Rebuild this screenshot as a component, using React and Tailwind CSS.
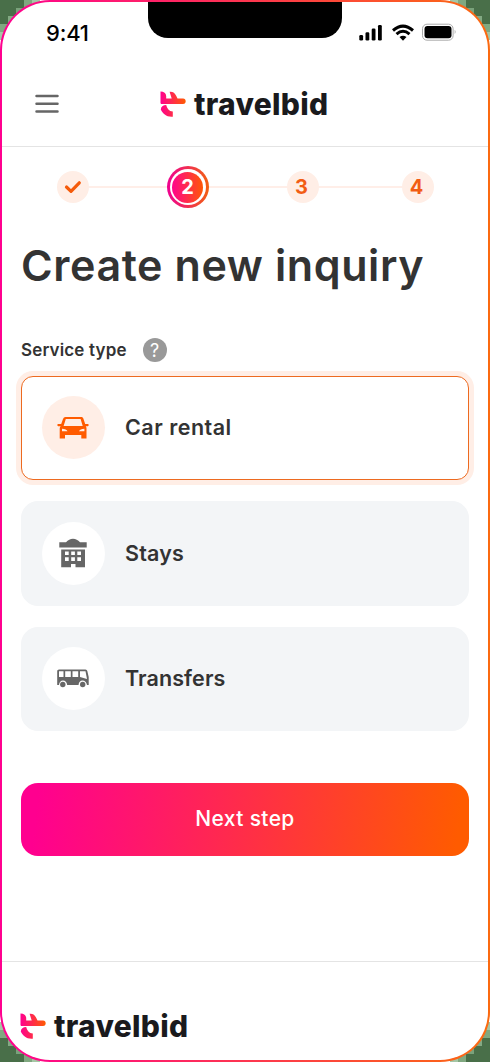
import React from "react";

const POINTS = [
  [0, 0, "#496f49"], [8, 0, "#496f49"], [16, 0, "#496f49"], [24, 0, "#80a880"], [32, 0, "#a5c6a5"],
  [0, 8, "#496f49"], [8, 8, "#496f49"], [16, 8, "#7aa27b"], [0, 16, "#496f49"], [8, 16, "#83a983"],
  [0, 24, "#80a880"], [0, 32, "#a5c6a5"],
];

function Corner({ className }) {
  return (
    <svg className={`absolute h-10 w-10 ${className}`} viewBox="0 0 40 40" shapeRendering="crispEdges">
      {POINTS.map(([x, y, fill]) => (
        <rect key={`${x}-${y}`} x={x} y={y} width="8" height="8" fill={fill} />
      ))}
    </svg>
  );
}

function Logo() {
  return (
    <div className="flex items-center">
      <svg className="h-[26px] w-[26px] shrink-0" viewBox="0 0 26 26">
        <defs>
          <linearGradient id="plane" x1="0" x2="1" y1="0" y2="0">
            <stop stopColor="#ff008f" />
            <stop offset="1" stopColor="#ff5b00" />
          </linearGradient>
        </defs>
        <path
          fill="url(#plane)"
          d="M.5 .5C4 .5 6 2 6.200 5V7.500H11.700L9.600 .8C13 .5 14.800 2 16.300 5L17.500 7.500H23C26.600 7.500 26.600 13 23 13H1L.5 12ZM.8 18.500C1 15.500 3 14 6.200 14C7.200 17.300 9 20.300 12.800 20.600V25.700C6.500 26.300 2.800 22.500 .8 18.500Z"
        />
      </svg>
      <span className="ml-[8px] text-[30px] leading-[40px] font-extrabold tracking-[0.3px] text-[#1a1a1d]">travelbid</span>
    </div>
  );
}

function StatusBar() {
  return (
    <div className="flex h-[60px] items-start pl-[44px]">
      <span className="mt-[17px] w-[102px] text-[22px] leading-[28px] font-medium tracking-[-0.2px] text-black">9:41</span>
      <div className="h-[36px] w-[194px] rounded-b-[20px] bg-black" />
      <svg className="mt-[20px] ml-[16px] h-[22px] w-[99px]" viewBox="0 0 99 22">
        <g fill="#000">
          <rect x="1.300" y="13" width="3.800" height="5.500" rx="1.300" />
          <rect x="7.500" y="10.300" width="3.800" height="8.200" rx="1.300" />
          <rect x="13.700" y="6.500" width="3.800" height="12" rx="1.300" />
          <rect x="20" y="3" width="3.800" height="15.500" rx="1.300" />
          <rect x="66.500" y="4" width="27" height="12.300" rx="3" />
        </g>
        <g fill="none" stroke="#000" strokeWidth="3">
          <path d="M35 8.500Q45 -.2 55 8.500M38.500 12.200Q45 6.400 51.500 12.200" />
        </g>
        <path d="M41.500 15Q45 12.300 48.500 15L45 18.800Z" />
        <rect x="64.500" y="2.200" width="30.600" height="16" rx="4.500" fill="none" stroke="#aaa" />
        <path d="M96.700 7.700Q98.500 9.700 96.700 12Z" fill="#aaa" />
      </svg>
    </div>
  );
}

function Stepper() {
  return (
    <div className="flex h-[42px] items-center justify-center text-[20px] font-bold text-[#f25d14]">
      <div className="flex size-[32px] items-center justify-center rounded-full bg-[#ffeee6]">
        <svg className="h-[14px] w-[18px]" viewBox="0 0 18 14">
          <path d="M2.500 7L7 11.300L15.300 2.800" fill="none" stroke="#f55b0b" strokeWidth="3.200" strokeLinecap="round" strokeLinejoin="round" />
        </svg>
      </div>
      <div className="h-[2px] w-[78px] bg-[#ffeee8]" />
      <div className="size-[42px] rounded-full bg-[linear-gradient(90deg,#ef0091,#f26010)] p-[3px]">
        <div className="size-[36px] rounded-full bg-white p-[2.500px]">
          <div className="flex size-[31px] items-center justify-center rounded-full bg-[linear-gradient(90deg,#ff048d,#ff5805)] text-white">2</div>
        </div>
      </div>
      <div className="h-[2px] w-[78px] bg-[#ffeee8]" />
      <div className="flex size-[32px] items-center justify-center rounded-full bg-[#ffeee6] pr-[2px]">3</div>
      <div className="h-[2px] w-[83px] bg-[#ffeee8]" />
      <div className="flex size-[32px] items-center justify-center rounded-full bg-[#ffeee6] pr-[2px]">4</div>
    </div>
  );
}

function CarIcon() {
  return (
    <svg className="h-[22px] w-[32px]" viewBox="0 0 32 22" fill="#ff5b00">
      <path fillRule="evenodd" d="M8.500 0H24C25.500 0 26 .6 26.500 2L28.200 7H31Q32.500 8 31 9.200H28.800Q29.500 10 29.500 11.500V21.500H24.300V18H8V21.500H2.700V11.500Q2.700 10 3.700 9.200H1Q-.5 8 1 7H4.200L6 2Q6.600 0 8.500 0ZM8.800 2L6.600 9H25.700L23.600 2ZM5 11.700V14.200H10.500Q9.500 11.700 5 11.700ZM22 14.200H27.400V11.700Q23 11.700 22 14.200Z" />
    </svg>
  );
}

function HotelIcon() {
  return (
    <svg className="h-[30px] w-[28px]" viewBox="0 0 28 30" fill="#666">
      <path fillRule="evenodd" d="M.3 4.300H7Q10 .8 14 .8T21 4.300H27.700V9.500H.3ZM2.200 11.500H26V29.300H16.500V26H12V29.300H2.200ZM6 13.500V17H9.700V13.500ZM12.200 13.500V17H15.900V13.500ZM18.300 13.500V17H22V13.500ZM6 19.300V23H9.700V19.300ZM12.200 19.300V23H15.900V19.300ZM18.300 19.300V23H22V19.300Z" />
    </svg>
  );
}

function BusIcon() {
  return (
    <svg className="h-[19px] w-[32px]" viewBox="0 0 32 19" fill="#666">
      <path fillRule="evenodd" d="M1 1Q1 .5 2 .5H28.500Q30 .5 30.300 2L31.700 8V16H30Q29 11.500 25.500 11.500T21.500 16H10.200Q9.500 11.500 6 11.500T2 16H.2V2Q.2 1 1 1ZM2 2.200V8H6.500V2.200ZM8.200 2.200V8H13.800V2.200ZM15.500 2.200V8H21.200V2.200ZM23 2.200V8L30 10L28.500 2.200Z" />
      <circle cx="5.800" cy="15.500" r="2.700" />
      <circle cx="25.700" cy="15.500" r="2.700" />
    </svg>
  );
}

function Service({ icon, label, selected, tracking }) {
  return (
    <div className={`flex h-[104.500px] items-center pl-[19.500px] ${selected ? "rounded-[12px] border border-[#ed6a20] bg-white shadow-[0_0_0_5px_#ffeee6]" : "rounded-[17px] border border-[#f3f5f7] bg-[#f3f5f7]"}`}>
      <div className={`flex size-[63px] items-center justify-center rounded-full ${selected ? "bg-[#ffeee6]" : "bg-white"}`}>{icon}</div>
      <span className={`mb-[1px] ml-[20.500px] text-[21.500px] leading-[30px] font-semibold text-[#333] ${tracking}`}>{label}</span>
    </div>
  );
}

export default function App() {
  return (
    <div className="relative h-[1062px] w-[490px] overflow-hidden bg-white font-['Inter',sans-serif]">
      <Corner className="top-0 left-0" />
      <Corner className="top-0 right-0 -scale-x-100" />
      <Corner className="bottom-0 left-0 -scale-y-100" />
      <Corner className="right-0 bottom-0 -scale-100" />
      <div className="relative h-full rounded-[50px] bg-[linear-gradient(90deg,#ff008f,#fb6a10)] p-[2px]">
        <div className="flex h-full flex-col overflow-hidden rounded-[48px] bg-white">
          <StatusBar />
          <header className="flex h-[85px] items-center border-b border-[#e4e4e4] pl-[33px]">
            <svg className="h-[20px] w-[24px]" viewBox="0 0 24 20">
              <path d="M1.500 2H22.500M1.500 9.700H22.500M1.500 17.500H22.500" stroke="#666" strokeWidth="2.500" strokeLinecap="round" />
            </svg>
            <div className="ml-[101px]"><Logo /></div>
          </header>
          <main className="flex h-[814px] flex-col px-[19px] pt-[19px]">
            <Stepper />
            <h1 className="mt-[29px] h-[56px] text-[43px] leading-[56px] font-semibold tracking-[0.6px] whitespace-nowrap text-[#333]">Create new inquiry</h1>
            <div className="mt-[44px] flex h-[26px] items-center">
              <span className="pt-[2px] text-[17px] font-semibold tracking-[0.15px] text-[#333]">Service type</span>
              <div className="ml-[16px] flex size-[24px] items-center justify-center rounded-full bg-[#999] text-[18px] text-white">?</div>
            </div>
            <div className="mt-[12.500px] flex flex-col gap-[21px]">
              <Service selected icon={<CarIcon />} label="Car rental" tracking="tracking-[0.5px]" />
              <Service icon={<HotelIcon />} label="Stays" tracking="tracking-[0.2px]" />
              <Service icon={<BusIcon />} label="Transfers" tracking="tracking-[0.1px]" />
            </div>
            <button className="mt-[52px] h-[73px] shrink-0 rounded-[17px] bg-[linear-gradient(97deg,#ff008f_4%,#ff5b00_97%)] pb-[1px] text-[21px] font-medium tracking-[0.35px] text-white">Next step</button>
          </main>
          <footer className="flex-1 border-t border-[#e4e4e4] pt-[44px] pl-[18px]"><Logo /></footer>
        </div>
      </div>
    </div>
  );
}
